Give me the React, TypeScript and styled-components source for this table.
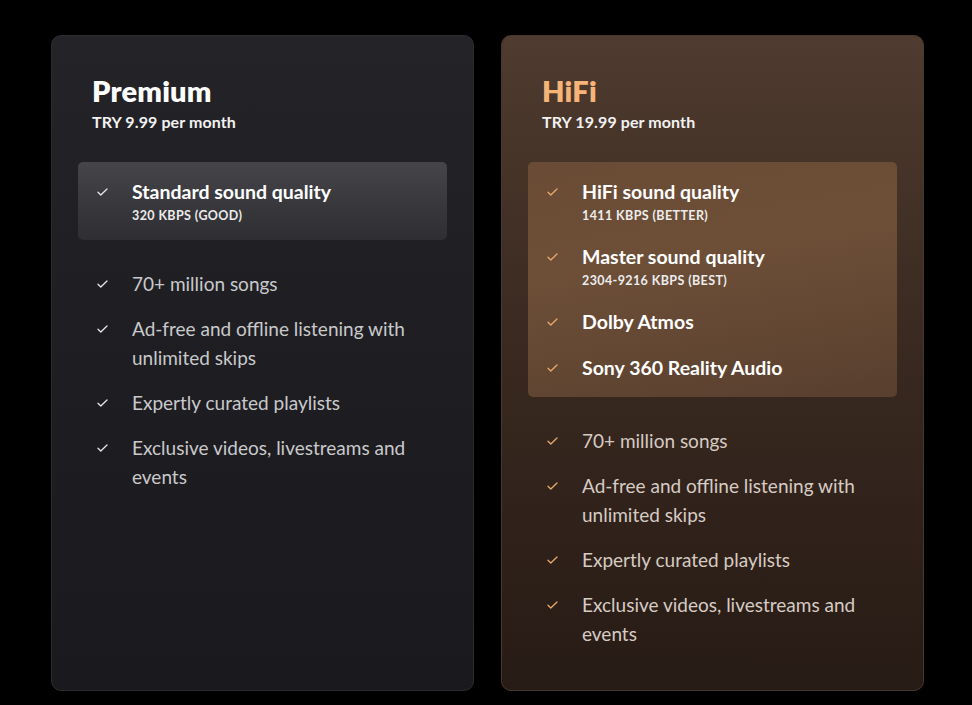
import React from 'react';
import styled, { createGlobalStyle } from 'styled-components';

type Feature = { title: string; detail?: string };

interface Plan {
  name: string;
  price: string;
  highlights: Feature[];
  features: string[];
  hifi?: boolean;
}

const common = [
  '70+ million songs',
  'Ad-free and offline listening with unlimited skips',
  'Expertly curated playlists',
  'Exclusive videos, livestreams and events',
];

const plans: Plan[] = [
  {
    name: 'Premium',
    price: 'TRY 9.99 per month',
    highlights: [{ title: 'Standard sound quality', detail: '320 KBPS (GOOD)' }],
    features: common,
  },
  {
    name: 'HiFi',
    price: 'TRY 19.99 per month',
    hifi: true,
    highlights: [
      { title: 'HiFi sound quality', detail: '1411 KBPS (BETTER)' },
      { title: 'Master sound quality', detail: '2304-9216 KBPS (BEST)' },
      { title: 'Dolby Atmos' },
      { title: 'Sony 360 Reality Audio' },
    ],
    features: common,
  },
];

const Check = ({ hifi }: { hifi?: boolean }) => (
  <CheckBox>
    <svg width="11" height="8" viewBox="0 0 11 8" fill="none">
      <path
        d="M1 4.2L3.8 7L10 1"
        stroke={hifi ? '#e9a86a' : '#e6e6e6'}
        strokeWidth="1.3"
        strokeLinecap="round"
        strokeLinejoin="round"
      />
    </svg>
  </CheckBox>
);

export default function App() {
  return (
    <>
      <GlobalStyle />
      <Page>
        {plans.map((p) => (
          <Card key={p.name} hifi={p.hifi}>
            <Title hifi={p.hifi}>{p.name}</Title>
            <Price>{p.price}</Price>
            <Highlight hifi={p.hifi}>
              {p.highlights.map((h) => (
                <Row key={h.title}>
                  <Check hifi={p.hifi} />
                  <div>
                    <HighlightTitle>{h.title}</HighlightTitle>
                    {h.detail && <HighlightDetail>{h.detail}</HighlightDetail>}
                  </div>
                </Row>
              ))}
            </Highlight>
            <List>
              {p.features.map((f) => (
                <Row key={f}>
                  <Check hifi={p.hifi} />
                  <FeatureText hifi={p.hifi}>{f}</FeatureText>
                </Row>
              ))}
            </List>
          </Card>
        ))}
      </Page>
    </>
  );
}

const GlobalStyle = createGlobalStyle`
  html, body {
    margin: 0;
    background: #000;
    font-family: Lato, "Noto Sans", sans-serif;
    -webkit-font-smoothing: antialiased;
  }
`;

const Page = styled.div`
  display: grid;
  grid-template-columns: 423px 423px;
  gap: 27px;
  padding: 35px 0 14px 51px;
`;

const Card = styled.div<{ hifi?: boolean }>`
  box-sizing: border-box;
  height: 656px;
  padding: 37px 26px 0 26px;
  border-radius: 10px;
  border: 1px solid ${({ hifi }) => (hifi ? '#4a372b' : '#2c2c30')};
  background: ${({ hifi }) =>
    hifi
      ? 'linear-gradient(180deg, #4f3b2f 0%, #3a2a21 45%, #271b15 100%)'
      : 'linear-gradient(180deg, #242428 0%, #1e1e22 50%, #1a1a1e 100%)'};
`;

const Title = styled.h2<{ hifi?: boolean }>`
  margin: 0 0 0 14px;
  font-size: 29px;
  line-height: 36px;
  font-weight: 800;
  letter-spacing: 0.2px;
  color: ${({ hifi }) => (hifi ? '#f6b479' : '#ffffff')};
`;

const Price = styled.div`
  margin: 4px 0 0 14px;
  font-size: 16px;
  line-height: 18px;
  font-weight: 700;
  letter-spacing: 0.1px;
  color: #f2f2f2;
`;

const Highlight = styled.div<{ hifi?: boolean }>`
  margin-top: 31px;
  padding: 18px 14px 17px;
  border-radius: 5px;
  display: flex;
  flex-direction: column;
  gap: 22px;
  background: ${({ hifi }) =>
    hifi
      ? 'linear-gradient(170deg, #6a4c36 0%, #6d4f38 40%, #583f2e 100%)'
      : 'linear-gradient(180deg, #46464a 0%, #37373b 60%, #2f2f33 100%)'};
`;

const Row = styled.div`
  display: flex;
  align-items: flex-start;
`;

const CheckBox = styled.span`
  flex: 0 0 40px;
  height: 24px;
  display: flex;
  align-items: center;
  padding-left: 5px;
  box-sizing: border-box;
`;

const HighlightTitle = styled.div`
  font-size: 19.5px;
  line-height: 24px;
  font-weight: 700;
  color: #ffffff;
`;

const HighlightDetail = styled.div`
  margin-top: 5px;
  font-size: 12.5px;
  line-height: 14px;
  font-weight: 700;
  letter-spacing: 0.4px;
  color: #ececec;
`;

const List = styled.div`
  margin-top: 29px;
  padding: 0 14px;
  display: flex;
  flex-direction: column;
  gap: 16px;

  ${CheckBox} {
    height: 29px;
  }
`;

const FeatureText = styled.div<{ hifi?: boolean }>`
  font-size: 19px;
  line-height: 29px;
  max-width: 290px;
  color: ${({ hifi }) => (hifi ? '#d6cbc3' : '#c9c9cb')};
`;
